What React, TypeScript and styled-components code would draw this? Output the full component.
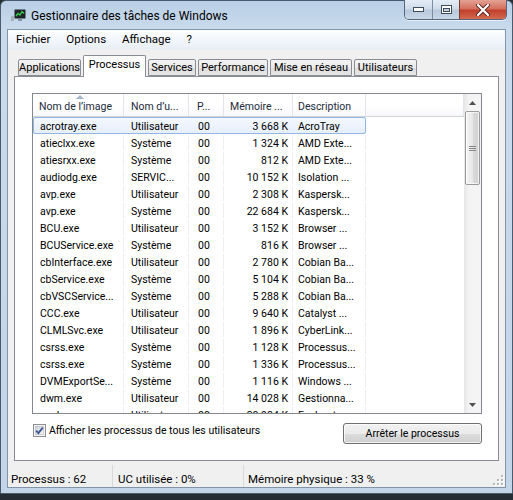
import styled, { createGlobalStyle } from 'styled-components';

type Align = 'left' | 'right';

interface Column {
  label: string;
  width: number;
  pad: number;
  headPad: number;
  align: Align;
}

const FONT = `Roboto, "Liberation Sans", sans-serif`;

const columns: Column[] = [
  { label: 'Nom de l’image', width: 90, pad: 6, headPad: 6, align: 'left' },
  { label: 'Nom d’u...', width: 65, pad: 7, headPad: 7, align: 'left' },
  { label: 'P...', width: 35, pad: 9, headPad: 8, align: 'left' },
  { label: 'Mémoire ...', width: 69, pad: 4, headPad: 6, align: 'right' },
  { label: 'Description', width: 73, pad: 5, headPad: 5, align: 'left' },
];

const rows: string[][] = [
  ['acrotray.exe', 'Utilisateur', '00', '3 668 K', 'AcroTray'],
  ['atieclxx.exe', 'Système', '00', '1 324 K', 'AMD Exte...'],
  ['atiesrxx.exe', 'Système', '00', '812 K', 'AMD Exte...'],
  ['audiodg.exe', 'SERVIC...', '00', '10 152 K', 'Isolation ...'],
  ['avp.exe', 'Utilisateur', '00', '2 308 K', 'Kaspersk...'],
  ['avp.exe', 'Système', '00', '22 684 K', 'Kaspersk...'],
  ['BCU.exe', 'Utilisateur', '00', '3 152 K', 'Browser ...'],
  ['BCUService.exe', 'Système', '00', '816 K', 'Browser ...'],
  ['cbInterface.exe', 'Utilisateur', '00', '2 780 K', 'Cobian Ba...'],
  ['cbService.exe', 'Système', '00', '5 104 K', 'Cobian Ba...'],
  ['cbVSCService...', 'Système', '00', '5 288 K', 'Cobian Ba...'],
  ['CCC.exe', 'Utilisateur', '00', '9 640 K', 'Catalyst ...'],
  ['CLMLSvc.exe', 'Utilisateur', '00', '1 896 K', 'CyberLink...'],
  ['csrss.exe', 'Système', '00', '1 128 K', 'Processus...'],
  ['csrss.exe', 'Système', '00', '1 336 K', 'Processus...'],
  ['DVMExportSe...', 'Système', '00', '1 116 K', 'Windows ...'],
  ['dwm.exe', 'Utilisateur', '00', '14 028 K', 'Gestionna...'],
  ['explorer.exe', 'Utilisateur', '00', '30 984 K', 'Explorat...'],
];

const tabs = [
  { label: 'Applications', width: 63 },
  { label: 'Processus', width: 63, active: true },
  { label: 'Services', width: 48 },
  { label: 'Performance', width: 70 },
  { label: 'Mise en réseau', width: 82 },
  { label: 'Utilisateurs', width: 63 },
];

const GlobalStyle = createGlobalStyle`
  html, body {
    margin: 0;
    padding: 0;
    background: #262c33;
  }
  body {
    font-family: ${FONT};
    color: #000;
  }
  * {
    box-sizing: border-box;
  }
`;

const Window = styled.div`
  width: 513px;
  height: 494px;
  display: flex;
  flex-direction: column;
  border: 1px solid #4b5b6e;
  border-radius: 6px 6px 0 0;
  background: linear-gradient(180deg, #b9cfe6 0px, #c9daec 28px, #c3d5e8 100%);
  padding: 0 6px 5px;
`;

const TitleBar = styled.div`
  height: 28px;
  display: flex;
  align-items: center;
  padding-left: 4px;
`;

const TitleText = styled.span`
  margin-left: 5px;
  margin-top: 1px;
  font-size: 12px;
  color: #000;
`;

const CaptionButtons = styled.div`
  display: flex;
  align-self: flex-start;
  margin: -1px -1px 0 auto;
  height: 20px;
  border: 1px solid #56677d;
  border-top: none;
  border-radius: 0 0 5px 5px;
  overflow: hidden;
  box-shadow: 0 1px 0 rgba(255, 255, 255, 0.6);
`;

const CaptionButton = styled.div<{ $w: number; $close?: boolean }>`
  width: ${({ $w }) => $w}px;
  display: flex;
  align-items: center;
  justify-content: center;
  border-left: 1px solid ${({ $close }) => ($close ? '#7a3a33' : '#7d8ea3')};
  background: ${({ $close }) =>
    $close
      ? 'linear-gradient(180deg, #e3a293 0%, #d4705f 45%, #c2402c 55%, #d16a4f 100%)'
      : 'linear-gradient(180deg, #e4edf6 0%, #d0dcea 45%, #b8c9dc 55%, #c9d8e8 100%)'};
  &:first-child {
    border-left: none;
  }
`;

const Client = styled.div`
  flex: 1;
  display: flex;
  flex-direction: column;
  border: 1px solid #8294aa;
  background: #f0f0f0;
`;

const MenuBar = styled.div`
  height: 19px;
  display: flex;
  align-items: center;
  background: linear-gradient(180deg, #fdfeff 0%, #f1f5fb 60%, #e8eef7 100%);
`;

const MenuItem = styled.span`
  padding: 0 8px;
  font-size: 11.5px;
  line-height: 19px;
`;

const TabArea = styled.div`
  flex: 1;
  display: flex;
  flex-direction: column;
  padding: 6px 6px 0;
`;

const TabStrip = styled.div`
  height: 21px;
  display: flex;
  align-items: flex-end;
  gap: 2px;
  padding-left: 4px;
`;

const Tab = styled.div<{ $w: number; $active?: boolean }>`
  width: ${({ $w }) => $w}px;
  height: ${({ $active }) => ($active ? 22 : 17)}px;
  margin-bottom: ${({ $active }) => ($active ? -1 : 0)}px;
  position: relative;
  z-index: ${({ $active }) => ($active ? 1 : 0)};
  border: 1px solid #898c95;
  border-bottom: ${({ $active }) => ($active ? 'none' : '1px solid #898c95')};
  border-radius: 2px 2px 0 0;
  background: ${({ $active }) =>
    $active ? '#ffffff' : 'linear-gradient(180deg, #f3f3f3 0%, #ebebeb 50%, #dedede 51%, #e5e5e5 100%)'};
  font-size: 11px;
  text-align: center;
  line-height: ${({ $active }) => ($active ? 17 : 15)}px;
`;

const Panel = styled.div`
  flex: 1;
  display: flex;
  flex-direction: column;
  border: 1px solid #898c95;
  background: #ffffff;
  padding: 16px 16px 0 17px;
`;

const ListView = styled.div`
  height: 321px;
  display: flex;
  border: 1px solid #828790;
  background: #ffffff;
`;

const ListMain = styled.div`
  flex: 1;
  min-width: 0;
  display: flex;
  flex-direction: column;
  overflow: hidden;
`;

const Header = styled.div`
  height: 23px;
  flex-shrink: 0;
  display: flex;
  border-bottom: 1px solid #d5d5d5;
  background: linear-gradient(180deg, #ffffff 0%, #ffffff 50%, #f7f8fa 100%);
`;

const HeaderCell = styled.div<{ $w: number; $pad: number }>`
  position: relative;
  width: ${({ $w }) => $w}px;
  flex-shrink: 0;
  padding-left: ${({ $pad }) => $pad}px;
  border-right: 1px solid #e3e5ea;
  font-size: 10.5px;
  line-height: 25px;
  color: #1e2b3c;
  white-space: nowrap;
  overflow: hidden;
`;

const HeaderFill = styled.div`
  flex: 1;
  border-right: 1px solid #e3e5ea;
`;

const SortArrow = styled.svg`
  position: absolute;
  top: 1px;
  left: 43px;
`;

const Body = styled.div`
  flex: 1;
  overflow: hidden;
`;

const Row = styled.div<{ $selected?: boolean }>`
  height: 17px;
  display: flex;
  width: ${columns.reduce((s, c) => s + c.width, 0) + 1}px;
  padding-left: 1px;
  border-top: 1px solid ${({ $selected }) => ($selected ? '#92b7e4' : 'transparent')};
  border-bottom: 1px solid ${({ $selected }) => ($selected ? '#92b7e4' : 'transparent')};
  border-radius: 2px;
  background: ${({ $selected }) =>
    $selected ? 'linear-gradient(180deg, #f4f8fe 0%, #e6effb 100%)' : 'transparent'};
  box-shadow: ${({ $selected }) => ($selected ? 'inset 1px 0 0 #92b7e4, inset -1px 0 0 #92b7e4' : 'none')};
`;

const Cell = styled.div<{ $w: number; $pad: number; $align: Align; $selected?: boolean }>`
  width: ${({ $w }) => $w}px;
  flex-shrink: 0;
  text-align: ${({ $align }) => $align};
  padding-top: 1px;
  padding-left: ${({ $align, $pad }) => ($align === 'left' ? $pad : 0)}px;
  padding-right: ${({ $align, $pad }) => ($align === 'right' ? $pad : 0)}px;
  border-right: 1px solid ${({ $selected }) => ($selected ? 'transparent' : '#efefef')};
  font-size: 10.5px;
  line-height: 16px;
  white-space: nowrap;
`;

const ScrollBar = styled.div`
  width: 17px;
  flex-shrink: 0;
  display: flex;
  flex-direction: column;
  background: linear-gradient(90deg, #e6e6e6 0%, #f4f4f4 30%, #f4f4f4 100%);
`;

const ScrollArrow = styled.div`
  height: 17px;
  display: flex;
  align-items: center;
  justify-content: center;
`;

const ScrollTrack = styled.div`
  flex: 1;
  padding: 0 1px;
`;

const Thumb = styled.div`
  height: 74px;
  border: 1px solid #9b9b9b;
  border-radius: 2px;
  background: linear-gradient(90deg, #f4f4f4 0%, #e8e8e8 50%, #d9d9d9 51%, #d2d2d2 100%);
  box-shadow: inset 0 0 0 1px rgba(255, 255, 255, 0.7);
  display: flex;
  align-items: center;
  justify-content: center;
`;

const Footer = styled.div`
  display: flex;
  justify-content: space-between;
  align-items: flex-start;
  margin-top: 9px;
  padding-left: 1px;
`;

const CheckRow = styled.label`
  display: flex;
  align-items: center;
  gap: 3px;
  margin-top: 1px;
  font-size: 10.5px;
  line-height: 13px;
`;

const Button = styled.div`
  width: 139px;
  height: 21px;
  border: 1px solid #707070;
  border-radius: 3px;
  background: linear-gradient(180deg, #f2f2f2 0%, #ebebeb 50%, #dddddd 51%, #cfcfcf 100%);
  box-shadow: inset 0 0 0 1px rgba(255, 255, 255, 0.75);
  font-size: 10.5px;
  line-height: 19px;
  text-align: center;
`;

const StatusBar = styled.div`
  height: 24px;
  margin-top: 2px;
  display: flex;
  align-items: stretch;
  font-size: 11.5px;
  position: relative;
`;

const StatusCell = styled.div<{ $w?: number; $pad: number }>`
  width: ${({ $w }) => ($w ? `${$w}px` : 'auto')};
  flex: ${({ $w }) => ($w ? '0 0 auto' : '1')};
  padding-left: ${({ $pad }) => $pad}px;
  padding-top: 5px;
  line-height: 18px;
  border-right: ${({ $w }) => ($w ? '1px solid #d9d9d9' : 'none')};
  margin-top: 2px;
`;

const Grip = styled.svg`
  position: absolute;
  right: 1px;
  bottom: 1px;
`;

function TaskIcon() {
  return (
    <svg width="15" height="13" viewBox="0 0 15 13">
      <rect x="0" y="7" width="3" height="5" fill="#a7b0b9" />
      <rect x="3.5" y="0.5" width="11" height="9" rx="1" fill="#1d2327" stroke="#6d7c8a" />
      <polyline points="5,7 7,4.5 9,6 11,2.5 13,4.5" fill="none" stroke="#3bd14e" strokeWidth="1.3" />
      <rect x="7" y="10" width="4" height="2" fill="#8996a4" />
    </svg>
  );
}

function CheckMark() {
  return (
    <svg width="13" height="13" viewBox="0 0 13 13">
      <defs>
        <linearGradient id="cbg" x1="0" y1="0" x2="1" y2="1">
          <stop offset="0" stopColor="#cdd1d6" />
          <stop offset="1" stopColor="#f7f7f7" />
        </linearGradient>
      </defs>
      <rect x="0.5" y="0.5" width="12" height="12" fill="#f4f4f4" stroke="#8e8f8f" />
      <rect x="2.5" y="2.5" width="8" height="8" fill="url(#cbg)" stroke="#b1b5ba" strokeWidth="0.6" />
      <path d="M3.2 6.6 L5.4 9 L9.8 3.6" fill="none" stroke="#3b5495" strokeWidth="1.8" />
    </svg>
  );
}

export default function App() {
  return (
    <>
      <GlobalStyle />
      <Window>
        <TitleBar>
          <TaskIcon />
          <TitleText>Gestionnaire des tâches de Windows</TitleText>
          <CaptionButtons>
            <CaptionButton $w={27}>
              <svg width="11" height="5" viewBox="0 0 11 5">
                <rect x="0.5" y="0.5" width="10" height="4" fill="#ffffff" stroke="#3e4c5e" />
              </svg>
            </CaptionButton>
            <CaptionButton $w={27}>
              <svg width="11" height="9" viewBox="0 0 11 9">
                <rect x="0.5" y="0.5" width="10" height="8" fill="#ffffff" stroke="#3e4c5e" />
                <rect x="2.5" y="3.5" width="6" height="3" fill="#c3d1e0" stroke="#3e4c5e" />
              </svg>
            </CaptionButton>
            <CaptionButton $w={47} $close>
              <svg width="14" height="12" viewBox="0 0 14 12">
                <path d="M2 1 L12 11 M12 1 L2 11" stroke="#5a2620" strokeWidth="4" strokeLinecap="round" />
                <path d="M2 1 L12 11 M12 1 L2 11" stroke="#ffffff" strokeWidth="2.2" strokeLinecap="round" />
              </svg>
            </CaptionButton>
          </CaptionButtons>
        </TitleBar>

        <Client>
          <MenuBar>
            <MenuItem>Fichier</MenuItem>
            <MenuItem>Options</MenuItem>
            <MenuItem>Affichage</MenuItem>
            <MenuItem>?</MenuItem>
          </MenuBar>

          <TabArea>
            <TabStrip>
              {tabs.map((t) => (
                <Tab key={t.label} $w={t.width} $active={t.active}>
                  {t.label}
                </Tab>
              ))}
            </TabStrip>

            <Panel>
              <ListView>
                <ListMain>
                  <Header>
                    {columns.map((c, i) => (
                      <HeaderCell key={c.label} $w={i === 0 ? c.width + 1 : c.width} $pad={c.headPad}>
                        {i === 0 && (
                          <SortArrow width="8" height="4" viewBox="0 0 8 4">
                            <path d="M0.5 4 L4 0.5 L7.5 4 Z" fill="#a9bcd2" stroke="#7f98b5" strokeWidth="0.6" />
                          </SortArrow>
                        )}
                        {c.label}
                      </HeaderCell>
                    ))}
                    <HeaderFill />
                  </Header>
                  <Body>
                    {rows.map((r, ri) => (
                      <Row key={ri} $selected={ri === 0}>
                        {r.map((v, ci) => (
                          <Cell
                            key={ci}
                            $w={columns[ci].width}
                            $pad={columns[ci].pad}
                            $align={columns[ci].align}
                            $selected={ri === 0}
                          >
                            {v}
                          </Cell>
                        ))}
                      </Row>
                    ))}
                  </Body>
                </ListMain>
                <ScrollBar>
                  <ScrollArrow>
                    <svg width="7" height="4" viewBox="0 0 7 4">
                      <path d="M0 4 L3.5 0 L7 4 Z" fill="#505050" />
                    </svg>
                  </ScrollArrow>
                  <ScrollTrack>
                    <Thumb>
                      <svg width="7" height="7" viewBox="0 0 7 7">
                        <path d="M0 1.5 H7 M0 3.5 H7 M0 5.5 H7" stroke="#8a8a8a" strokeWidth="1" />
                      </svg>
                    </Thumb>
                  </ScrollTrack>
                  <ScrollArrow>
                    <svg width="7" height="4" viewBox="0 0 7 4">
                      <path d="M0 0 L3.5 4 L7 0 Z" fill="#505050" />
                    </svg>
                  </ScrollArrow>
                </ScrollBar>
              </ListView>

              <Footer>
                <CheckRow>
                  <CheckMark />
                  Afficher les processus de tous les utilisateurs
                </CheckRow>
                <Button>Arrêter le processus</Button>
              </Footer>
            </Panel>
          </TabArea>

          <StatusBar>
            <StatusCell $w={105} $pad={3}>Processus : 62</StatusCell>
            <StatusCell $w={131} $pad={5}>UC utilisée : 0%</StatusCell>
            <StatusCell $pad={4}>Mémoire physique : 33 %</StatusCell>
            <Grip width="11" height="11" viewBox="0 0 11 11">
              {[
                [8, 0],
                [8, 4],
                [4, 4],
                [8, 8],
                [4, 8],
                [0, 8],
              ].map(([x, y]) => (
                <g key={`${x}-${y}`}>
                  <rect x={x + 1} y={y + 1} width="2" height="2" fill="#ffffff" />
                  <rect x={x} y={y} width="2" height="2" fill="#b8b8b8" />
                </g>
              ))}
            </Grip>
          </StatusBar>
        </Client>
      </Window>
    </>
  );
}
